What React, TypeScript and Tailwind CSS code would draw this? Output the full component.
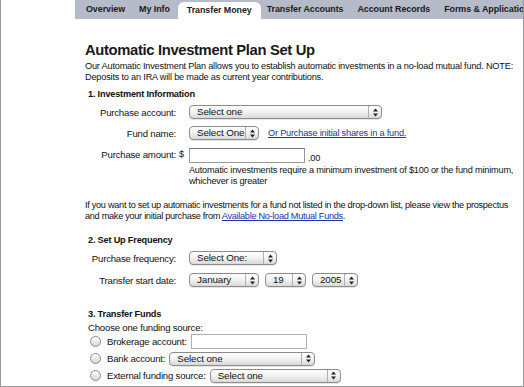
import React from 'react';

const Arrows = () => (
  <span className="flex h-full w-[13px] items-center justify-center border-l border-[#b0b0b0]">
    <svg width="5" height="9" viewBox="0 0 5 9">
      <path d="M2.5 0.5 L5 3.5 L0 3.5 Z" fill="#222" />
      <path d="M2.5 8.5 L5 5.5 L0 5.5 Z" fill="#222" />
    </svg>
  </span>
);

const Select = ({ label, w }: { label: string; w: string }) => (
  <div className={`${w} inline-flex h-[14px] items-center justify-between whitespace-nowrap rounded-[4px] border border-[#8c8c8c] bg-gradient-to-b from-white via-[#f2f2f2] to-[#d9d9d9] text-[9.8px] leading-none tracking-[-0.1px] text-[#111] shadow-[0_1px_0_#e6e6e6]`}>
    <span className="pl-[7px]">{label}</span>
    <Arrows />
  </div>
);

const Radio = () => (
  <span className="inline-block h-[11px] w-[11px] shrink-0 rounded-full border border-[#8c8c8c] bg-gradient-to-b from-white to-[#d6d6d6]" />
);

const Row = ({ label, children }: { label: string; children: React.ReactNode }) => (
  <div className="flex h-[14px] items-center">
    <div className="w-[91px] shrink-0 whitespace-nowrap text-right">{label}</div>
    <div className="ml-[13px] flex items-center">{children}</div>
  </div>
);

const Sep = () => <div className="mx-[7px] mb-[4px] h-[11px] w-px bg-[#e2e4ea]" />;

export default function App() {
  return (
    <div className="h-[387px] w-[524px] overflow-hidden border-x border-b border-[#9a9a9a] bg-white font-['Liberation_Sans',Arial,sans-serif] text-[9.2px] leading-[11px] tracking-[-0.2px] text-[#111]">
      <div className="ml-[74px] flex h-[19px] items-end whitespace-nowrap bg-[#b6bbc9] pl-[11px] text-[8.9px] font-bold tracking-[-0.05px] text-[#1a1a1a]">
        <div className="flex h-[19px] items-center pb-[1px]">Overview</div>
        <Sep />
        <div className="flex h-[19px] items-center pb-[1px]">My Info</div>
        <div className="ml-[8px] flex h-[17px] items-center rounded-t-[6px] bg-white px-[9px] pb-[1px]">Transfer Money</div>
        <div className="ml-[6px] flex h-[19px] items-center pb-[1px]">Transfer Accounts</div>
        <Sep />
        <div className="flex h-[19px] items-center pb-[1px]">Account Records</div>
        <Sep />
        <div className="flex h-[19px] items-center pb-[1px]">Forms &amp; Applications</div>
      </div>

      <div className="pl-[84px] pr-0">
        <h1 className="mt-[22px] text-[14.8px] font-bold leading-[18px] tracking-[-0.35px] text-[#1a1a1a]">Automatic Investment Plan Set Up</h1>
        <p className="mt-[2px]">
          Our Automatic Investment Plan allows you to establish automatic investments in a no-load mutual fund. NOTE: Deposits to an IRA will be made as current year contributions.
        </p>

        <div className="mt-[6px] pl-[3px] font-bold">1. Investment Information</div>
        <div className="mt-[5px] flex flex-col gap-[7px] text-[9.6px]">
          <Row label="Purchase account:">
            <Select label="Select one" w="w-[193px]" />
          </Row>
          <Row label="Fund name:">
            <Select label="Select One" w="w-[70px]" />
            <a className="ml-[9px] whitespace-nowrap text-[9.2px] text-[#2233aa] underline">Or Purchase initial shares in a fund.</a>
          </Row>
        </div>
        <div className="mt-[8px] flex items-start">
          <div className="w-[91px] shrink-0 whitespace-nowrap pt-[1px] text-right text-[9.6px]">Purchase amount:</div>
          <div className="ml-[3px] pt-[1px]">$</div>
          <div className="ml-[5px]">
            <div className="flex items-end">
              <div className="h-[15px] w-[116px] border border-[#9a9a9a] border-t-[#777] bg-white" />
              <span className="ml-[3px] leading-[10px]">.00</span>
            </div>
            <p className="mt-[2px] w-[335px]">
              Automatic investments require a minimum investment of $100 or the fund minimum, whichever is greater
            </p>
          </div>
        </div>

        <p className="mt-[13px] tracking-[-0.3px]">
          If you want to set up automatic investments for a fund not listed in the drop-down list, please view the prospectus and make your initial purchase from{' '}
          <a className="text-[#2233aa] underline">Available No-load Mutual Funds</a>.
        </p>

        <div className="mt-[13px] pl-[3px] font-bold">2. Set Up Frequency</div>
        <div className="mt-[5px] flex flex-col gap-[8px] text-[9.6px]">
          <Row label="Purchase frequency:">
            <Select label="Select One:" w="w-[88px]" />
          </Row>
          <Row label="Transfer start date:">
            <Select label="January" w="w-[70px]" />
            <span className="ml-[6px] flex"><Select label="19" w="w-[41px]" /></span>
            <span className="ml-[6px] flex"><Select label="2005" w="w-[46px]" /></span>
          </Row>
        </div>

        <div className="mt-[22px] pl-[3px] font-bold">3. Transfer Funds</div>
        <div className="mt-[2px] pl-[3px] text-[9.6px]">Choose one funding source:</div>
        <div className="mt-[1px] flex flex-col gap-[2px] pl-[5px] text-[9.6px]">
          <div className="flex h-[15px] items-center">
            <Radio />
            <span className="ml-[6px] whitespace-nowrap">Brokerage account:</span>
            <div className="ml-[4px] h-[15px] w-[116px] border border-[#b0b0b0] bg-white" />
          </div>
          <div className="flex h-[15px] items-center">
            <Radio />
            <span className="ml-[6px] whitespace-nowrap">Bank account:</span>
            <span className="ml-[4px] flex"><Select label="Select one" w="w-[146px]" /></span>
          </div>
          <div className="flex h-[15px] items-center">
            <Radio />
            <span className="ml-[6px] whitespace-nowrap">External funding source:</span>
            <span className="ml-[4px] flex"><Select label="Select one" w="w-[131px]" /></span>
          </div>
        </div>
      </div>
    </div>
  );
}
